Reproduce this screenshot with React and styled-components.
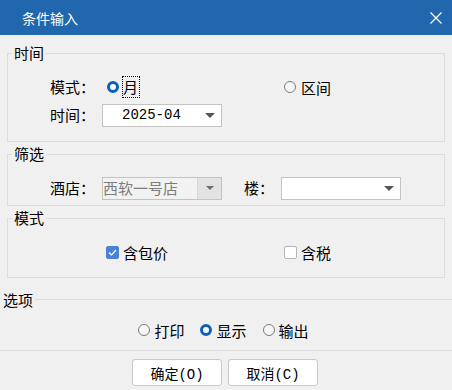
import React from "react"
import styled, { createGlobalStyle } from "styled-components"

const GlobalStyle = createGlobalStyle`
  html, body { margin: 0; padding: 0; background: #f0f0f0; }
  body {
    font-family: "Liberation Mono", "Noto Sans CJK SC", monospace;
    font-size: 15px;
    color: #000;
  }
`

const Window = styled.div`
  width: 452px;
  height: 390px;
  background: #f0f0f0;
  display: flex;
  flex-direction: column;
  overflow: hidden;
`

const TitleBar = styled.div`
  height: 35px;
  flex: none;
  background: #2167ae;
  color: #fff;
  display: flex;
  align-items: center;
  justify-content: space-between;
  padding: 0 10px 0 22px;
  font-family: "Noto Sans CJK SC", sans-serif;
  font-size: 14px;
`

const Body = styled.div`
  padding: 9px 7px 0;
  display: flex;
  flex-direction: column;
`

const Group = styled.fieldset`
  margin: ${props => props.$top || 0}px 0 0;
  padding: 0;
  border: 1px solid #dcdcdc;
  min-width: 0;
`

const Legend = styled.legend`
  margin-left: 4px;
  padding: 0 2px;
  line-height: 18px;
  font-family: "Noto Sans CJK SC", sans-serif;
`

const Content = styled.div`
  display: flex;
  flex-direction: column;
  gap: 6px;
  padding: ${props => props.$pad};
`

const Row = styled.div`
  display: flex;
  align-items: center;
  height: 22px;
`

const Label = styled.span`
  width: ${props => props.$w || 52}px;
  margin-left: ${props => props.$ml || 0}px;
  flex: none;
  font-family: "Noto Sans CJK SC", sans-serif;
  line-height: 22px;
`

const Option = styled.label`
  display: flex;
  align-items: center;
  gap: ${props => props.$gap || 4}px;
  width: ${props => (props.$w ? props.$w + "px" : "auto")};
  margin-left: ${props => props.$ml || 0}px;
  font-family: "Noto Sans CJK SC", sans-serif;
  flex: none;
`

const Radio = styled.span`
  width: 12px;
  height: 12px;
  box-sizing: border-box;
  border-radius: 50%;
  flex: none;
  background: ${props => (props.$on ? "#fff" : "#f7f7f7")};
  border: ${props => (props.$on ? "3.5px solid #0b5fbd" : "1px solid #7a7a7a")};
`

const CheckBox = styled.span`
  width: 13px;
  height: 13px;
  box-sizing: border-box;
  border-radius: 2px;
  flex: none;
  display: flex;
  align-items: center;
  justify-content: center;
  background: ${props => (props.$on ? "#4c82d6" : "#fff")};
  border: 1px solid ${props => (props.$on ? "#4c82d6" : "#b5b5b5")};
`

const Focus = styled.span`
  outline: 1px dotted #000;
  outline-offset: 0;
  line-height: 20px;
  padding: 0 1px 0 0;
`

const Select = styled.div`
  width: 120px;
  height: 23px;
  box-sizing: border-box;
  border: 1px solid #c3c3c3;
  background: ${props => (props.$disabled ? "#f2f2f2" : "#fff")};
  display: flex;
  align-items: stretch;
  flex: none;
`

const SelectValue = styled.span`
  flex: 1;
  display: flex;
  align-items: center;
  padding-left: ${props => props.$pl || 0}px;
  color: ${props => (props.$disabled ? "#7c7c7c" : "#000")};
  font-size: ${props => props.$size || 15}px;
  white-space: nowrap;
  overflow: hidden;
`

const ArrowBox = styled.span`
  width: 23px;
  flex: none;
  display: flex;
  align-items: center;
  justify-content: center;
  background: ${props => (props.$disabled ? "#e3e3e3" : "transparent")};
  border-left: ${props => (props.$disabled ? "1px solid #d8d8d8" : "none")};
`

const Arrow = styled.span`
  width: 0;
  height: 0;
  border-left: ${props => (props.$small ? 4 : 5)}px solid transparent;
  border-right: ${props => (props.$small ? 4 : 5)}px solid transparent;
  border-top: ${props => (props.$small ? 4 : 5)}px solid ${props => (props.$small ? "#6d6d6d" : "#555")};
`

const SectionHeader = styled.div`
  display: flex;
  align-items: center;
  margin: 12px -7px 0;
  height: 18px;
  padding-left: 3px;
  font-family: "Noto Sans CJK SC", sans-serif;
`

const HeaderLine = styled.span`
  flex: 1;
  height: 1px;
  background: #dcdcdc;
  margin-left: 2px;
`

const OptionsRow = styled.div`
  display: flex;
  justify-content: center;
  align-items: center;
  gap: 16px;
  height: 22px;
  margin: 11px -7px 0;
  padding-right: 5px;
`

const Divider = styled.div`
  height: 1px;
  background: #dcdcdc;
  margin: 9px -7px 0;
`

const Buttons = styled.div`
  display: flex;
  justify-content: center;
  gap: 6px;
  margin-top: 8px;
  padding-right: 2px;
`

const Button = styled.button`
  width: 90px;
  height: 27px;
  box-sizing: border-box;
  background: #fff;
  border: 1px solid #c9c9c9;
  border-radius: 3px;
  font-family: "Liberation Mono", "Noto Sans CJK SC", monospace;
  font-size: 14px;
  color: #000;
  padding: 0;
  display: flex;
  align-items: center;
  justify-content: center;
`

const Close = () => (
  <svg width="12" height="12" viewBox="0 0 12 12">
    <path d="M0.5 0.5L11.5 11.5M11.5 0.5L0.5 11.5" stroke="#fff" strokeWidth="1.3" />
  </svg>
)

const Tick = () => (
  <svg width="9" height="7" viewBox="0 0 9 7">
    <path d="M1 3.5L3.5 6L8 1" fill="none" stroke="#fff" strokeWidth="1.2" />
  </svg>
)

const Dropdown = ({ value, disabled, pl, size }) => (
  <Select $disabled={disabled}>
    <SelectValue $disabled={disabled} $pl={pl} $size={size}>{value}</SelectValue>
    <ArrowBox $disabled={disabled}>
      <Arrow $small={disabled} />
    </ArrowBox>
  </Select>
)

const App = () => {
  return (
    <Window>
      <GlobalStyle />
      <TitleBar>
        <span>条件输入</span>
        <Close />
      </TitleBar>
      <Body>
        <Group>
          <Legend>时间</Legend>
          <Content $pad="14px 0 15px 42px">
            <Row>
              <Label>模式：</Label>
              <Option $w={177} $ml={5}>
                <Radio $on />
                <Focus>月</Focus>
              </Option>
              <Option $gap={5}>
                <Radio />
                <span>区间</span>
              </Option>
            </Row>
            <Row>
              <Label>时间：</Label>
              <Dropdown value="2025-04" pl={19} size={14} />
            </Row>
          </Content>
        </Group>

        <Group $top={3}>
          <Legend>筛选</Legend>
          <Content $pad="14px 0 6px 42px">
            <Row>
              <Label>酒店：</Label>
              <Dropdown value="西软一号店" disabled />
              <Label $w={37} $ml={22}>楼：</Label>
              <Dropdown value="" />
            </Row>
          </Content>
        </Group>

        <Group $top={3}>
          <Legend>模式</Legend>
          <Content $pad="14px 0 14px 98px">
            <Row>
              <Option $w={178}>
                <CheckBox $on>
                  <Tick />
                </CheckBox>
                <span>含包价</span>
              </Option>
              <Option>
                <CheckBox />
                <span>含税</span>
              </Option>
            </Row>
          </Content>
        </Group>

        <SectionHeader>
          <span>选项</span>
          <HeaderLine />
        </SectionHeader>
        <OptionsRow>
          <Option>
            <Radio />
            <span>打印</span>
          </Option>
          <Option>
            <Radio $on />
            <span>显示</span>
          </Option>
          <Option>
            <Radio />
            <span>输出</span>
          </Option>
        </OptionsRow>
        <Divider />
        <Buttons>
          <Button>确定(O)</Button>
          <Button>取消(C)</Button>
        </Buttons>
      </Body>
    </Window>
  )
}

export default App
